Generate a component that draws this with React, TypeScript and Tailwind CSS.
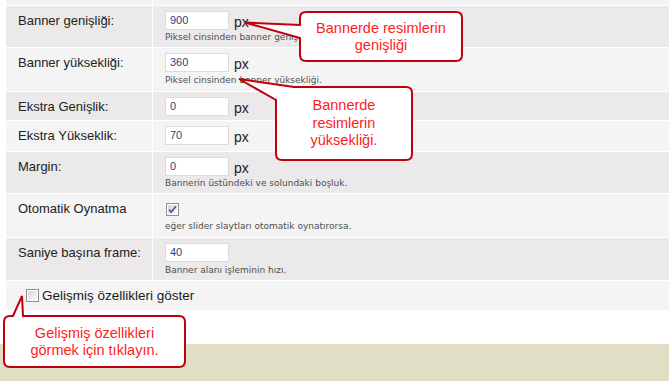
import React from "react";

const DARK = "bg-[#ebe9ea]";
const LIGHT = "bg-[#f4f4f4]";

function Row({
  label,
  bg,
  h,
  children,
}: {
  label: string;
  bg: string;
  h: string;
  children?: React.ReactNode;
}) {
  return (
    <div className={`flex gap-px ${h}`}>
      <div
        className={`w-[146px] shrink-0 pl-[12px] pt-[7px] text-[13px] leading-[16px] text-[#222] ${bg}`}
      >
        {label}
      </div>
      <div className={`flex-1 pl-[12px] pt-[5px] ${bg}`}>{children}</div>
    </div>
  );
}

function Field({ value, px = true }: { value: string; px?: boolean }) {
  return (
    <div className="flex items-center h-[19px]">
      <div className="w-[64px] h-[19px] bg-white border border-[#dcdcdc] pl-[4px] text-[11px] leading-[17px] text-[#2e3f7f]">
        {value}
      </div>
      {px && (
        <span className="ml-[5px] mt-[2px] text-[14px] leading-[16px] text-[#222]">
          px
        </span>
      )}
    </div>
  );
}

function Hint({ children, mt = "mt-[2px]" }: { children: React.ReactNode; mt?: string }) {
  return (
    <div
      className={`${mt} font-['DejaVu_Sans',sans-serif] text-[9px] leading-[11px] text-[#4f4f4f] whitespace-nowrap`}
    >
      {children}
    </div>
  );
}

function Checkbox({ checked }: { checked?: boolean }) {
  return (
    <svg width="13" height="13" viewBox="0 0 13 13" className="block shrink-0">
      <defs>
        <linearGradient id={checked ? "cbg1" : "cbg2"} x1="0" y1="0" x2="1" y2="1">
          <stop offset="0" stopColor="#d6d6d6" />
          <stop offset="1" stopColor="#fbfbfb" />
        </linearGradient>
      </defs>
      <rect x="0.5" y="0.5" width="12" height="12" fill="#fff" stroke="#8e8f8f" />
      <rect x="2" y="2" width="9" height="9" fill={`url(#${checked ? "cbg1" : "cbg2"})`} />
      {checked && (
        <path
          d="M3 6.5 L5.2 9 L10 3.2"
          fill="none"
          stroke="#4a5ea8"
          strokeWidth="1.8"
          strokeLinejoin="miter"
        />
      )}
    </svg>
  );
}

export default function App() {
  return (
    <div className="relative w-[669px] h-[381px] overflow-hidden bg-white font-['Liberation_Sans',Arial,sans-serif]">
      {/* top strip (end of the previous row) */}
      <div className="flex gap-px h-[5px] ml-[6px]">
        <div className={`w-[146px] shrink-0 ${LIGHT}`} />
        <div className={`flex-1 ${LIGHT}`} />
      </div>

      <div className="flex flex-col gap-px mt-px ml-[6px]">
        <Row label="Banner genişliği:" bg={DARK} h="h-[41px]">
          <Field value="900" />
          <Hint>Piksel cinsinden banner genişliği.</Hint>
        </Row>
        <Row label="Banner yüksekliği:" bg={LIGHT} h="h-[43px]">
          <Field value="360" />
          <Hint mt="mt-[3px]">Piksel cinsinden banner yüksekliği.</Hint>
        </Row>
        <Row label="Ekstra Genişlik:" bg={DARK} h="h-[28px]">
          <Field value="0" />
        </Row>
        <Row label="Ekstra Yükseklik:" bg={LIGHT} h="h-[30px]">
          <Field value="70" />
        </Row>
        <Row label="Margin:" bg={DARK} h="h-[41px]">
          <Field value="0" />
          <Hint>Bannerin üstündeki ve solundaki boşluk.</Hint>
        </Row>
        <Row label="Otomatik Oynatma" bg={LIGHT} h="h-[43px]">
          <div className="mt-[4px] ml-px">
            <Checkbox checked />
          </div>
          <Hint mt="mt-[5px]">eğer slider slaytları otomatik oynatırorsa.</Hint>
        </Row>
        <Row label="Saniye başına frame:" bg={DARK} h="h-[42px]">
          <Field value="40" px={false} />
          <Hint mt="mt-[3px]">Banner alanı işleminin hızı.</Hint>
        </Row>
        <div className={`h-[29px] flex items-center pl-[20px] ${LIGHT}`}>
          <Checkbox />
          <span className="ml-[3px] text-[13.5px] leading-[16px] text-[#1a1a1a]">
            Gelişmiş özellikleri göster
          </span>
        </div>
      </div>

      <div className="h-[34px]" />
      <div className="h-[37px] bg-[#e0dfc6]" />

      {/* callout shapes */}
      <svg
        className="absolute left-0 top-0 pointer-events-none"
        width="669"
        height="381"
        viewBox="0 0 669 381"
      >
        <g fill="#ffffff" stroke="#c0000c" strokeWidth="2" strokeLinejoin="miter">
          <path d="M306 12 H456 Q462 12 462 18 V55 Q462 61 456 61 H306 Q300 61 300 55 V38 L245 22.5 L300 25 V18 Q300 12 306 12 Z" />
          <path d="M294 87 H406 Q412 87 412 93 V154 Q412 160 406 160 H282 Q276 160 276 154 V100 L239 79 Z" />
          <path d="M23 316 H179 Q185 316 185 322 V361 Q185 367 179 367 H10 Q4 367 4 361 V322 Q4 316 10 316 H13 L22 296 Z" />
        </g>
      </svg>

      {/* callout texts */}
      <div className="absolute left-[300px] top-[12px] w-[162px] h-[49px] flex items-center justify-center text-center text-[14.5px] leading-[17px] text-[#ff1c1c]">
        Bannerde resimlerin
        <br />
        genişliği
      </div>
      <div className="absolute left-[276px] top-[87px] w-[136px] h-[73px] flex items-center justify-center text-center text-[14.5px] leading-[17.5px] text-[#ff1c1c]">
        Bannerde
        <br />
        resimlerin
        <br />
        yüksekliği.
      </div>
      <div className="absolute left-[4px] top-[316px] w-[181px] h-[51px] flex items-center justify-center text-center text-[14.5px] leading-[17px] text-[#ff1c1c]">
        Gelişmiş özellikleri
        <br />
        görmek için tıklayın.
      </div>
    </div>
  );
}
